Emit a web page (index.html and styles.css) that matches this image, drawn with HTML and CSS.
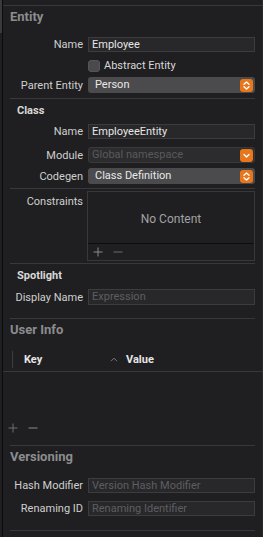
FILE: index.html
```html
<!DOCTYPE html>
<html lang="en">
<head>
  <meta charset="UTF-8" />
  <meta name="viewport" content="width=device-width, initial-scale=1" />
  <title>Entity Inspector</title>
  <link rel="stylesheet" href="styles.css">
</head>
<body>
  <div class="inspector">
    <div class="edge"><div class="edge-top"></div></div>

    <div class="content">
      <div class="rule wide"></div>

      <h2 class="section-title">Entity</h2>
      <div class="row r-name1">
        <label class="label">Name</label>
        <div class="field">Employee</div>
      </div>
      <div class="row r-check">
        <span></span>
        <div class="check"><span class="box"></span>Abstract Entity</div>
      </div>
      <div class="row r-parent">
        <label class="label">Parent Entity</label>
        <div class="popup">Person
          <svg class="stepper" viewBox="0 0 13 13"><rect width="13" height="13" rx="3" fill="#e8761c"/><path d="M4 5.2 6.5 3 9 5.2M4 7.8 6.5 10 9 7.8" fill="none" stroke="#fff" stroke-width="1.4" stroke-linecap="round" stroke-linejoin="round"/></svg>
        </div>
      </div>

      <div class="rule r-sep1"></div>

      <h3 class="sub-title">Class</h3>
      <div class="row r-name2">
        <label class="label">Name</label>
        <div class="field">EmployeeEntity</div>
      </div>
      <div class="row r-module">
        <label class="label">Module</label>
        <div class="popup disabled">Global namespace
          <svg class="stepper" viewBox="0 0 13 13"><rect width="13" height="13" rx="3" fill="#e8761c"/><path d="M4 5.5 6.5 8 9 5.5" fill="none" stroke="#fff" stroke-width="1.4" stroke-linecap="round" stroke-linejoin="round"/></svg>
        </div>
      </div>
      <div class="row r-codegen">
        <label class="label">Codegen</label>
        <div class="popup">Class Definition
          <svg class="stepper" viewBox="0 0 13 13"><rect width="13" height="13" rx="3" fill="#e8761c"/><path d="M4 5.2 6.5 3 9 5.2M4 7.8 6.5 10 9 7.8" fill="none" stroke="#fff" stroke-width="1.4" stroke-linecap="round" stroke-linejoin="round"/></svg>
        </div>
      </div>

      <div class="rule r-sep2"></div>

      <div class="row r-constraints">
        <label class="label top">Constraints</label>
        <div class="list-box">
          <div class="list-empty">No Content</div>
          <div class="list-tools">
            <svg class="tool" viewBox="0 0 10 10"><path d="M5 0.5V9.5M0.5 5H9.5" stroke="#8a8a8c" stroke-width="1"/></svg>
            <svg class="tool" viewBox="0 0 10 10"><path d="M0.5 5H9.5" stroke="#6a6a6c" stroke-width="1"/></svg>
          </div>
        </div>
      </div>

      <div class="rule r-sep3"></div>

      <h3 class="sub-title">Spotlight</h3>
      <div class="row r-display">
        <label class="label">Display Name</label>
        <div class="field placeholder">Expression</div>
      </div>

      <div class="rule r-sep4"></div>

      <h2 class="section-title">User Info</h2>
      <div class="table-head">
        <span class="col-divider"></span>
        <span class="col-key">Key</span>
        <svg class="sort" viewBox="0 0 8 5"><path d="M1 4.2 4 1.2 7 4.2" fill="none" stroke="#7c7c7e" stroke-width="1"/></svg>
        <span class="col-value">Value</span>
      </div>
      <div class="table-body"></div>
      <div class="table-tools">
        <svg class="tool" viewBox="0 0 10 10"><path d="M5 0.5V9.5M0.5 5H9.5" stroke="#6e6e70" stroke-width="1"/></svg>
        <svg class="tool" viewBox="0 0 10 10"><path d="M0.5 5H9.5" stroke="#8a8a8c" stroke-width="1"/></svg>
      </div>

      <div class="rule r-sep5"></div>

      <h2 class="section-title">Versioning</h2>
      <div class="row r-hash">
        <label class="label">Hash Modifier</label>
        <div class="field placeholder">Version Hash Modifier</div>
      </div>
      <div class="row r-rename">
        <label class="label">Renaming ID</label>
        <div class="field placeholder">Renaming Identifier</div>
      </div>

      <div class="rule r-sep6"></div>
    </div>
  </div>
</body>
</html>
```

FILE: styles.css
```css
html, body {
  margin: 0;
  padding: 0;
  height: 100%;
  background: #1f1f21;
  overflow: hidden;
  color: #d6d6d6;
  font-family: Roboto, "Liberation Sans", sans-serif;
  font-size: 11px;
}

.inspector {
  display: flex;
  height: 537px;
  border-right: 1px solid #29292b;
}

/* left split-view edge */
.edge {
  width: 2px;
  border-right: 1px solid #0b0b0c;
  flex: 0 0 auto;
}

.edge-top {
  height: 33px;
  background: #3a3a3c;
}

.content {
  flex: 1;
  padding: 0 7px 0 7px;
  display: flex;
  flex-direction: column;
}

.rule {
  height: 1px;
  background: #38383a;
  flex: 0 0 auto;
}

.rule.wide {
  margin: 5px -8px 0 -7px;
}

.section-title {
  margin: 0;
  height: 22px;
  line-height: 22px;
  font-size: 13px;
  font-weight: 700;
  color: #8c8c8e;
}

.sub-title {
  margin: 0;
  padding-left: 7px;
  height: 24px;
  line-height: 24px;
  font-size: 11px;
  font-weight: 700;
  color: #d8d8d8;
}

.row {
  display: grid;
  grid-template-columns: 73px 1fr;
  column-gap: 5px;
  align-items: center;
  height: 15px;
  flex: 0 0 auto;
}

.label {
  text-align: right;
  color: #cfcfcf;
  white-space: nowrap;
}

.label.top {
  align-self: start;
  padding-top: 4px;
}

.field {
  height: 15px;
  box-sizing: border-box;
  border: 1px solid #3c3c3e;
  background: #28282a;
  padding: 0 3px;
  line-height: 13px;
  color: #e6e6e6;
  white-space: nowrap;
  overflow: hidden;
}

.field.placeholder {
  color: #5e5e60;
}

.popup {
  height: 16px;
  box-sizing: border-box;
  border-radius: 3px;
  background: #4b4b4d;
  padding: 0 2px 0 7px;
  line-height: 16px;
  color: #e8e8e8;
  display: flex;
  align-items: center;
  justify-content: space-between;
}

.popup.disabled {
  background: #2c2c2e;
  border: 1px solid #3a3a3c;
  line-height: 14px;
  padding-left: 3px;
  padding-right: 1px;
  color: #5a5a5c;
}

.stepper {
  width: 13px;
  height: 13px;
}

.check {
  display: flex;
  align-items: center;
  gap: 4px;
  color: #d8d8d8;
}

.check .box {
  width: 12px;
  height: 12px;
  border-radius: 3px;
  background: #4a4a4c;
  border: 1px solid #555557;
  box-sizing: border-box;
}

/* vertical rhythm */
.r-name1 { margin-top: 9px; }
.r-check { margin-top: 7px; height: 12px; }
.r-parent { margin-top: 6px; height: 16px; }
.r-sep1 { margin-top: 5px; }
.r-name2 { margin-top: 1px; }
.r-module { margin-top: 8px; }
.r-codegen { margin-top: 6px; height: 16px; }
.r-sep2 { margin-top: 4px; }
.r-constraints { margin-top: 2px; height: 70px; align-items: stretch; }
.r-sep3 { margin-top: 2px; }
.r-display { margin-top: 1px; height: 16px; }
.r-display .field { height: 16px; line-height: 14px; }
.r-sep4 { margin-top: 13px; }
.r-hash { margin-top: 10px; }
.r-rename { margin-top: 8px; }
.r-sep5 { margin-top: 9px; }
.r-sep6 { margin-top: 14px; }

.list-box {
  border: 1px solid #38383a;
  display: flex;
  flex-direction: column;
  margin-left: -1px;
}

.list-empty {
  flex: 1;
  display: flex;
  align-items: center;
  justify-content: center;
  color: #a2a2a4;
  font-size: 12px;
  padding-top: 2px;
  border-bottom: 1px solid #0d0d0e;
}

.list-tools,
.table-tools {
  height: 16px;
  display: flex;
  align-items: center;
  gap: 10px;
  padding-left: 5px;
  flex: 0 0 auto;
}

.tool {
  width: 10px;
  height: 10px;
}

.table-head {
  margin: 6px -8px 0 -7px;
  height: 24px;
  border-bottom: 1px solid #38383a;
  display: flex;
  align-items: center;
  flex: 0 0 auto;
}

.col-divider {
  width: 1px;
  height: 17px;
  background: #3c3c3e;
  margin-left: 9px;
}

.col-key {
  margin-left: 11px;
  width: 84px;
  font-weight: 700;
  color: #e6e6e6;
}

.sort {
  width: 8px;
  height: 5px;
  margin-left: 2px;
}

.col-value {
  margin-left: 8px;
  font-weight: 700;
  color: #e6e6e6;
}

.table-body {
  height: 48px;
  flex: 0 0 auto;
}

.table-tools {
  padding-left: 0;
  margin-left: -2px;
}
```
